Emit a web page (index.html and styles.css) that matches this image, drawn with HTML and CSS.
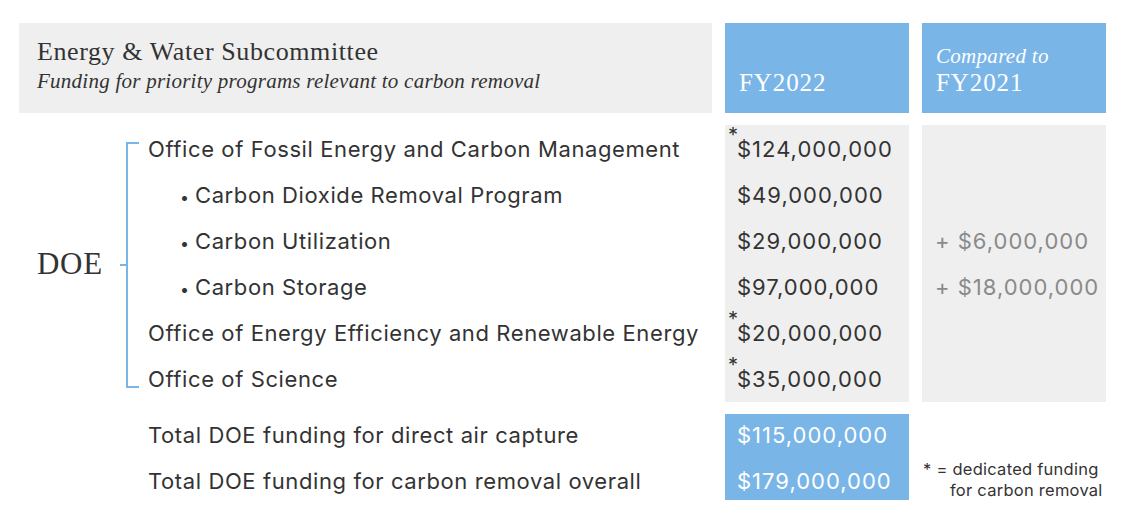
FILE: index.html
```html
<!DOCTYPE html>
<html>
<head>
<meta charset="utf-8">
<link rel="stylesheet" href="styles.css">
</head>
<body>
<div class="table">
  <div class="head-main">
    <div class="title">Energy &amp; Water Subcommittee</div>
    <div class="subtitle">Funding for priority programs relevant to carbon removal</div>
  </div>
  <div class="head-col">
    <div class="head-year">FY2022</div>
  </div>
  <div class="head-col">
    <div class="head-small">Compared to</div>
    <div class="head-year">FY2021</div>
  </div>

  <div class="body-main">
    <div class="agency">DOE</div>
    <div class="bracket"></div>
    <div class="items">
      <div class="row">Office of Fossil Energy and Carbon Management</div>
      <div class="row sub"><span class="dot">•</span>Carbon Dioxide Removal Program</div>
      <div class="row sub"><span class="dot">•</span>Carbon Utilization</div>
      <div class="row sub"><span class="dot">•</span>Carbon Storage</div>
      <div class="row">Office of Energy Efficiency and Renewable Energy</div>
      <div class="row">Office of Science</div>
    </div>
  </div>
  <div class="col-gray">
    <div class="row num"><span class="star">*</span>$124,000,000</div>
    <div class="row num">$49,000,000</div>
    <div class="row num">$29,000,000</div>
    <div class="row num">$97,000,000</div>
    <div class="row num"><span class="star">*</span>$20,000,000</div>
    <div class="row num"><span class="star">*</span>$35,000,000</div>
  </div>
  <div class="col-gray delta">
    <div class="row"></div>
    <div class="row"></div>
    <div class="row num">+ $6,000,000</div>
    <div class="row num">+ $18,000,000</div>
    <div class="row"></div>
    <div class="row"></div>
  </div>

  <div class="totals-main">
    <div class="trow">Total DOE funding for direct air capture</div>
    <div class="trow">Total DOE funding for carbon removal overall</div>
  </div>
  <div class="col-blue">
    <div class="trow num">$115,000,000</div>
    <div class="trow num">$179,000,000</div>
  </div>
  <div class="note">
    <div class="note-line">* = dedicated funding</div>
    <div class="note-line indent">for carbon removal</div>
  </div>
</div>
</body>
</html>
```

FILE: styles.css
```css
html, body {
  margin: 0;
  padding: 0;
  background: #ffffff;
}

body {
  font-family: "Inter", "Noto Sans", sans-serif;
  color: #333333;
}

.table {
  display: grid;
  grid-template-columns: 693px 184px 184px;
  grid-template-rows: 90px 277px 86px;
  column-gap: 13px;
  row-gap: 12px;
  padding: 23px 0 0 19px;
}

.head-main {
  background: #efefef;
  padding: 14px 0 0 18px;
  font-family: "Liberation Serif", serif;
}

.title {
  font-size: 26px;
  line-height: 29px;
  color: #333333;
  letter-spacing: 0.6px;
}

.subtitle {
  font-size: 21px;
  line-height: 25px;
  font-style: italic;
  color: #333333;
  margin-top: 3px;
  letter-spacing: 0.25px;
}

.head-col {
  background: #7ab5e8;
  color: #ffffff;
  font-family: "Liberation Serif", serif;
  display: flex;
  flex-direction: column;
  justify-content: flex-end;
  padding: 0 0 16px 14px;
}

.head-year {
  font-size: 25px;
  line-height: 28px;
  letter-spacing: 0.9px;
}

.head-small {
  font-size: 21px;
  line-height: 26px;
  font-style: italic;
  letter-spacing: 0.3px;
}

.body-main {
  display: flex;
  align-items: center;
}

.agency {
  font-family: "Liberation Serif", serif;
  font-size: 31px;
  width: 83px;
  padding-left: 18px;
  color: #333333;
  letter-spacing: 0.7px;
}

.bracket {
  position: relative;
  width: 11px;
  height: 242px;
  border: 2px solid #7ab5e8;
  border-right: none;
  margin-left: 6px;
  margin-top: 2px;
}

.bracket::before {
  content: "";
  position: absolute;
  left: -8px;
  top: 120px;
  width: 7px;
  height: 2px;
  background: #7ab5e8;
}

.items {
  margin-left: 9px;
  align-self: stretch;
  padding-top: 1px;
}

.row {
  height: 46px;
  line-height: 46px;
  font-size: 22px;
  letter-spacing: 0.6px;
  white-space: nowrap;
}

.sub {
  padding-left: 32px;
}

.dot {
  display: inline-block;
  width: 15px;
  font-size: 16px;
  letter-spacing: 0;
}

.col-gray {
  background: #efefef;
  padding-left: 12px;
  padding-top: 1px;
}

.num {
  position: relative;
  letter-spacing: 1px;
}

.star {
  position: absolute;
  left: -9px;
  top: 3px;
  font-size: 20px;
  line-height: 12px;
  height: 12px;
  letter-spacing: 0;
}

.delta {
  color: #8a8a8a;
  padding-left: 13px;
}

.totals-main {
  padding-left: 129px;
  display: flex;
  flex-direction: column;
  gap: 4px;
}

.trow {
  height: 42px;
  line-height: 42px;
  font-size: 22px;
  letter-spacing: 0.6px;
  white-space: nowrap;
}

.col-blue {
  background: #7ab5e8;
  color: #ffffff;
  padding-left: 12px;
  display: flex;
  flex-direction: column;
  gap: 4px;
}

.col-blue .trow {
  letter-spacing: 1px;
}

.note {
  padding-top: 45px;
  font-size: 16.5px;
  line-height: 21px;
  color: #333333;
  padding-left: 1px;
  letter-spacing: 0.25px;
}

.indent {
  padding-left: 27px;
}
```
